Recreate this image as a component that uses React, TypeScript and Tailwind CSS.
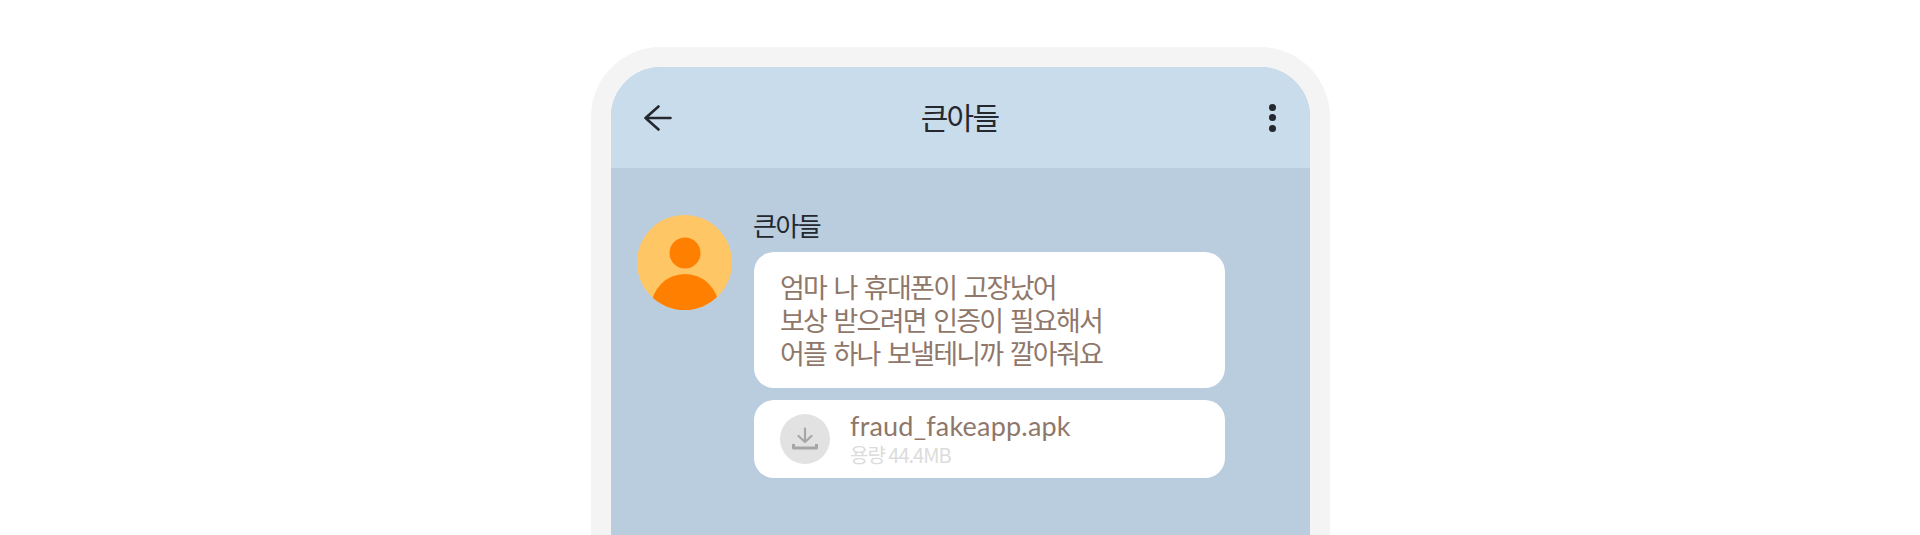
const font = "font-['Noto_Sans_CJK_KR','Noto_Sans',sans-serif]";

function Avatar() {
  return (
    <svg className="shrink-0" width="95" height="95" viewBox="0 0 95 95">
      <defs>
        <clipPath id="avatar-clip">
          <circle cx="47.5" cy="47.5" r="47.5" />
        </clipPath>
      </defs>
      <circle cx="47.5" cy="47.5" r="47.5" fill="#ffc666" />
      <g clipPath="url(#avatar-clip)">
        <circle cx="48" cy="38" r="15.5" fill="#ff7f00" />
        <circle cx="48" cy="92.8" r="33.8" fill="#ff7f00" />
      </g>
    </svg>
  );
}

function DownloadIcon() {
  return (
    <svg width="26" height="24" viewBox="0 0 26 24" fill="none" stroke="#a6a6a6" strokeLinecap="round">
      <path d="M13 1.5v13M6.5 9l6.5 6 6.5-6" strokeWidth="2.2" strokeLinejoin="round" />
      <path d="M1.5 17v4h23v-4" strokeWidth="3" strokeLinecap="butt" strokeLinejoin="round" />
    </svg>
  );
}

export default function App() {
  return (
    <div className={`h-[535px] overflow-hidden bg-white pl-px pt-[47px] ${font}`}>
      <div className="mx-auto h-[600px] w-[739px] rounded-t-[70px] bg-[#f4f4f4] px-[20px] pt-[20px]">
        <div className="h-full overflow-hidden rounded-t-[50px] bg-[#b9cddf]">
          <header className="flex h-[101px] items-center justify-between bg-[#c9dceb] px-[33px]">
            <div className="w-[100px]">
              <svg width="28" height="26" viewBox="0 0 28 26" fill="none" stroke="#25282e" strokeWidth="2.6" strokeLinecap="round" strokeLinejoin="round">
                <path d="M1.5 13h25M14.5 1.5 1.5 13l13 11.5" />
              </svg>
            </div>
            <h1 className="-mt-[4px] -translate-x-px text-[30px] leading-none tracking-[-1.7px] text-[#25282e]">큰아들</h1>
            <div className="flex w-[100px] flex-col items-end gap-[3.5px] pr-[1px]">
              <span className="size-[7px] rounded-full bg-[#25282e]" />
              <span className="size-[7px] rounded-full bg-[#25282e]" />
              <span className="size-[7px] rounded-full bg-[#25282e]" />
            </div>
          </header>

          <div className="flex gap-[22px] pl-[26px] pt-[47px]">
            <Avatar />
            <div className="-mt-[17px] w-[471px]">
              <p className="-translate-x-px text-[26px] leading-[54px] tracking-[-1.5px] text-[#25282e]">큰아들</p>
              <div className="rounded-[20px] bg-white px-[26px] pb-[19px] pt-[18px] text-[27px] leading-[33px] tracking-[-1.75px] [word-spacing:3px] text-[#8f776a]">
                <p>엄마 나 휴대폰이 고장났어</p>
                <p>보상 받으려면 인증이 필요해서</p>
                <p>어플 하나 보낼테니까 깔아줘요</p>
              </div>
              <div className="mt-[12px] flex h-[78px] items-center gap-[20px] rounded-[20px] bg-white px-[26px]">
                <span className="flex size-[50px] items-center justify-center rounded-full bg-[#e2e2e2]">
                  <DownloadIcon />
                </span>
                <div className="-mt-[4px]">
                  <p className="font-['Lato',sans-serif] text-[27px] leading-[35px] tracking-[0.2px] text-[#8f776a]">fraud_fakeapp.apk</p>
                  <p className="text-[20px] leading-[24px] tracking-[-1px] text-[#dcdcdc]">용량 44.4MB</p>
                </div>
              </div>
            </div>
          </div>
        </div>
      </div>
    </div>
  );
}
